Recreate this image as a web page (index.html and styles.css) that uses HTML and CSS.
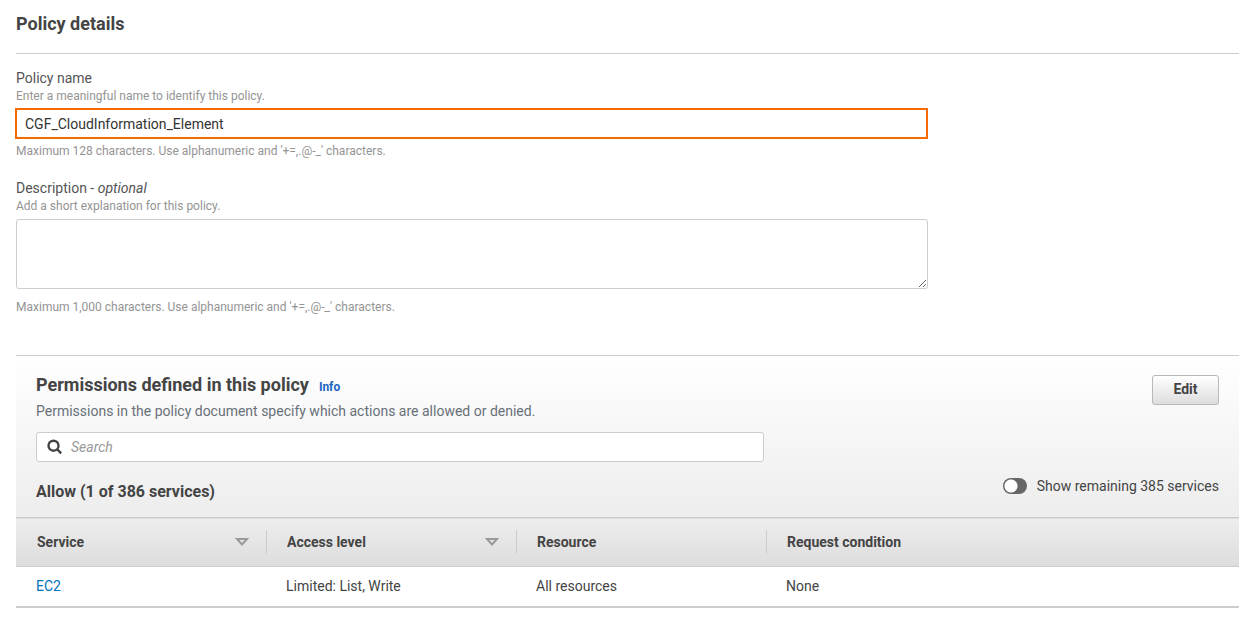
FILE: index.html
```html
<!DOCTYPE html>
<html lang="en">
<head>
<meta charset="utf-8">
<title>Policy details</title>
<link rel="stylesheet" href="styles.css">
</head>
<body>
<main class="page">
  <h1 class="page-title">Policy details</h1>
  <form class="form">
    <div class="field">
      <label class="label" for="policy-name">Policy name</label>
      <p class="hint">Enter a meaningful name to identify this policy.</p>
      <input class="name-input" id="policy-name" type="text" value="CGF_CloudInformation_Element">
      <p class="constraint">Maximum 128 characters. Use alphanumeric and '+=,.@-_' characters.</p>
    </div>
    <div class="field">
      <label class="label" for="description">Description - <i>optional</i></label>
      <p class="hint">Add a short explanation for this policy.</p>
      <textarea class="description" id="description"></textarea>
      <p class="constraint constraint-loose">Maximum 1,000 characters. Use alphanumeric and '+=,.@-_' characters.</p>
    </div>
  </form>
  <section class="panel">
    <div class="panel-head">
      <header class="panel-top">
        <div class="panel-intro">
          <div class="title-row">
            <h2 class="panel-title">Permissions defined in this policy</h2>
            <a class="info" href="#">Info</a>
          </div>
          <p class="panel-text">Permissions in the policy document specify which actions are allowed or denied.</p>
        </div>
        <button class="edit" type="button">Edit</button>
      </header>
      <label class="search">
        <svg class="search-icon" viewBox="0 0 16 16" aria-hidden="true"><circle cx="6.5" cy="6.7" r="5"/><path d="M10 10.2L14.2 14.4"/></svg>
        <input class="search-input" type="search" placeholder="Search" aria-label="Search">
      </label>
      <div class="allow-row">
        <h3 class="allow">Allow (1 of 386 services)</h3>
        <label class="toggle"><input class="switch" type="checkbox" role="switch">Show remaining 385 services</label>
      </div>
    </div>
    <table class="table">
      <colgroup><col class="col"><col class="col"><col class="col"><col></colgroup>
      <thead>
        <tr>
          <th scope="col"><div class="th"><span>Service</span><svg class="sort" viewBox="0 0 14 8" aria-hidden="true"><path d="M2 1H12L7 6.5Z"/></svg></div></th>
          <th scope="col"><div class="th"><span>Access level</span><svg class="sort" viewBox="0 0 14 8" aria-hidden="true"><path d="M2 1H12L7 6.5Z"/></svg></div></th>
          <th scope="col"><div class="th">Resource</div></th>
          <th scope="col"><div class="th th-last">Request condition</div></th>
        </tr>
      </thead>
      <tbody>
        <tr><td><a class="link" href="#">EC2</a></td><td>Limited: List, Write</td><td>All resources</td><td>None</td></tr>
      </tbody>
    </table>
  </section>
</main>
</body>
</html>
```
FILE: styles.css
```css
* { box-sizing: border-box; }
body {
  margin: 0;
  background: #fff;
  color: #444;
  font-family: Roboto, "Liberation Sans", sans-serif;
  font-size: 14px;
  line-height: 20px;
}
h1, h2, h3, p { margin: 0; }
a { text-decoration: none; }
.page { padding: 12px 17px 8px 16px; }
.page-title {
  padding-bottom: 17px;
  border-bottom: 1px solid #ccc;
  font-size: 18px;
  line-height: 24px;
  font-weight: 700;
}
.form {
  display: flex;
  flex-direction: column;
  gap: 18px;
  max-width: 912px;
  padding-top: 15px;
}
.field { display: flex; flex-direction: column; }
.label { line-height: 19px; color: #545454; }
.hint, .constraint { font-size: 12px; line-height: 16px; color: #949494; }
.hint { margin-bottom: 5px; }
.name-input {
  height: 31px;
  margin: -1px 0 0 -1px;
  padding: 0 8px;
  border: 2px solid #f66b00;
  outline: 0;
  background: #fff;
  color: #333;
  font: inherit;
}
.constraint { margin-top: 4px; padding-bottom: 2px; }
.constraint-loose { margin-top: 10px; }
.description {
  display: block;
  width: 100%;
  height: 70px;
  border: 1px solid #ccc;
  border-radius: 3px;
  font: inherit;
}
.panel { margin-top: 38px; border-top: 1px solid #ccc; }
.panel-head {
  padding: 16px 20px 9px;
  background: linear-gradient(#fff, #ededed);
}
.panel-top { display: flex; justify-content: space-between; align-items: center; }
.title-row { display: flex; align-items: baseline; gap: 10px; }
.panel-title { font-size: 18px; line-height: 26px; font-weight: 700; }
.info { font-size: 12px; font-weight: 700; color: #1a66c2; }
.panel-text { line-height: 26px; color: #687078; }
.edit {
  align-self: flex-start;
  width: 67px;
  height: 30px;
  margin-top: 3px;
  padding: 0 0 2px;
  border: 1px solid #b8b8b8;
  border-radius: 3px;
  background: linear-gradient(#fff, #ddd);
  color: #444;
  font: inherit;
  font-weight: 700;
}
.search {
  display: flex;
  align-items: center;
  gap: 8px;
  max-width: 728px;
  height: 30px;
  margin-top: 8px;
  padding: 0 10px;
  border: 1px solid #ccc;
  border-radius: 3px;
  background: #fff;
}
.search-icon { width: 16px; height: 16px; fill: none; stroke: #444; stroke-width: 2.4; }
.search-input {
  flex: 1;
  padding: 0;
  border: 0;
  outline: 0;
  background: transparent;
  font: inherit;
}
.search-input::placeholder { color: #999; font-style: italic; }
.allow-row { display: flex; justify-content: space-between; align-items: flex-start; margin-top: 14px; }
.allow { font-size: 16px; line-height: 32px; font-weight: 700; }
.toggle { display: flex; align-items: center; gap: 10px; }
.switch {
  appearance: none;
  width: 24px;
  height: 16px;
  margin: 0;
  border-radius: 8px;
  background: radial-gradient(circle at 8px 8px, #fff 6px, #666 7px);
}
.table { width: 100%; table-layout: fixed; border-collapse: collapse; }
.table thead {
  border-top: 1px solid #ccc;
  border-bottom: 1px solid #ccc;
  background: linear-gradient(#ededed, #ddd);
}
.col { width: 250px; }
.table th { padding: 0; text-align: left; font-weight: 700; }
.th {
  display: flex;
  justify-content: space-between;
  align-items: center;
  height: 24px;
  margin: 12px -1px 12px 0;
  padding: 0 17px 0 21px;
  border-right: 1px solid #ccc;
}
.th-last { margin-right: 0; border-right: 0; }
.sort { width: 14px; height: 8px; fill: none; stroke: #999; stroke-width: 2; }
.table td { height: 40px; padding: 0 20px; }
.table tbody { border-bottom: 2px solid #ccc; }
.link { color: #0073bb; }
```
